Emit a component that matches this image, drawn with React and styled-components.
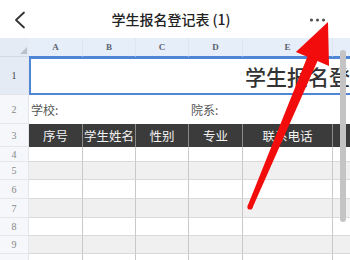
import React from "react";
import styled, { createGlobalStyle } from "styled-components";

const Global = createGlobalStyle`
  html, body { margin: 0; padding: 0; background: #fff; }
  body { font-family: "Noto Sans CJK SC", "Noto Sans", sans-serif; }
`;

const Page = styled.div`
  position: relative;
  width: 350px;
  height: 260px;
  overflow: hidden;
  background: #fff;
`;

const TopBar = styled.div`
  height: 38px;
  display: grid;
  grid-template-columns: 40px 1fr 40px;
  align-items: center;
  background: #fff;
`;

const Title = styled.div`
  text-align: center;
  font-size: 14px;
  font-weight: 500;
  color: #222;
  padding-right: 8px;
`;

const IconBtn = styled.div`
  display: flex;
  align-items: center;
  height: 38px;
`;

const Sheet = styled.div`
  display: grid;
  grid-template-columns: 29px 54px 53px 53px 54px 90px 60px;
  grid-template-rows: 19px 38px 29px 23px 15px 18px 19px 19px 18px 18px 19px;
  width: 420px;
`;

const Corner = styled.div`
  position: relative;
  background: #e4ebf4;
  border-bottom: 1px solid #cfd8e4;
  &::after {
    content: "";
    position: absolute;
    right: 2px;
    bottom: 2px;
    border-left: 7px solid transparent;
    border-bottom: 7px solid #b9c1cb;
  }
`;

const ColHead = styled.div`
  background: #e6eef9;
  border-right: 1px solid #dde6f2;
  border-bottom: 1px solid #4f86d6;
  display: flex;
  align-items: center;
  justify-content: center;
  font-family: "Liberation Serif", "DejaVu Serif", serif;
  font-weight: bold;
  font-size: 9px;
  color: #5a6270;
`;

const RowNum = styled.div`
  background: ${(p) => (p.$active ? "#e4ebf5" : "#f5f7fa")};
  border-bottom: 1px solid #e3e7ec;
  border-right: 1px solid #e3e7ec;
  display: flex;
  align-items: center;
  justify-content: center;
  font-family: "Liberation Serif", "DejaVu Serif", serif;
  font-size: 10px;
  color: ${(p) => (p.$active ? "#444" : "#888")};
`;

const TitleCell = styled.div`
  grid-column: 2 / -1;
  border: 2px solid #4f86d6;
  border-right: none;
  display: flex;
  align-items: center;
  padding-left: 214px;
  font-size: 21px;
  font-weight: 500;
  color: #333;
  white-space: nowrap;
  overflow: hidden;
`;

const InfoCell = styled.div`
  grid-column: span ${(p) => p.$span};
  display: flex;
  align-items: center;
  padding-left: 2px;
  font-size: 12px;
  color: #555;
`;

const HeadCell = styled.div`
  background: #3b3b3b;
  border-right: 1px solid #8a8a8a;
  display: flex;
  align-items: center;
  justify-content: center;
  font-size: 12.5px;
  color: #f2f2f2;
  white-space: nowrap;
`;

const Cell = styled.div`
  background: ${(p) => (p.$shade ? "#f0f0f0" : "#fff")};
  border-right: 1px solid #c9c9c9;
  border-bottom: 1px solid #d9d9d9;
`;

const ScrollThumb = styled.div`
  position: absolute;
  left: 340px;
  top: 50px;
  width: 6px;
  height: 172px;
  border-radius: 3px;
  background: #c4c4c4;
`;

const Overlay = styled.svg`
  position: absolute;
  left: 0;
  top: 0;
  pointer-events: none;
`;

const letters = ["A", "B", "C", "D", "E", ""];
const heads = ["序号", "学生姓名", "性别", "专业", "联系电话", ""];

function Arrow() {
  const tip = [328, 22];
  const tail = [250, 207];
  const dx = tip[0] - tail[0];
  const dy = tip[1] - tail[1];
  const len = Math.hypot(dx, dy);
  const u = [dx / len, dy / len];
  const n = [-u[1], u[0]];
  const headLen = 40;
  const headHalf = 18;
  const base = [tip[0] - headLen * u[0], tip[1] - headLen * u[1]];
  const topHalf = 5.5;
  const botHalf = 2.6;
  const p = (pt) => `${pt[0].toFixed(1)},${pt[1].toFixed(1)}`;
  const pts = [
    tip,
    [base[0] + headHalf * n[0], base[1] + headHalf * n[1]],
    [base[0] + topHalf * n[0], base[1] + topHalf * n[1]],
    [tail[0] + botHalf * n[0], tail[1] + botHalf * n[1]],
    [tail[0] - botHalf * n[0], tail[1] - botHalf * n[1]],
    [base[0] - topHalf * n[0], base[1] - topHalf * n[1]],
    [base[0] - headHalf * n[0], base[1] - headHalf * n[1]],
  ];
  return (
    <Overlay width="350" height="260" viewBox="0 0 350 260">
      <polygon points={pts.map(p).join(" ")} fill="#f20c0c" />
      <circle cx={tail[0]} cy={tail[1]} r={botHalf} fill="#f20c0c" />
    </Overlay>
  );
}

export default function App() {
  const bodyRows = [4, 5, 6, 7, 8, 9, 10];
  return (
    <Page>
      <Global />
      <TopBar>
        <IconBtn>
          <svg width="40" height="38" viewBox="0 0 40 38">
            <polyline points="24,12.5 16,20 24,27.5" fill="none" stroke="#333" strokeWidth="1.8" strokeLinecap="round" strokeLinejoin="round" />
          </svg>
        </IconBtn>
        <Title>学生报名登记表 (1)</Title>
        <IconBtn>
          <svg width="40" height="38" viewBox="0 0 40 38">
            <circle cx="1.5" cy="20" r="1.6" fill="#555" />
            <circle cx="7.5" cy="20" r="1.6" fill="#555" />
            <circle cx="13.5" cy="20" r="1.6" fill="#555" />
          </svg>
        </IconBtn>
      </TopBar>
      <Sheet>
        <Corner />
        {letters.map((l, i) => (
          <ColHead key={i}>{l}</ColHead>
        ))}

        <RowNum $active>1</RowNum>
        <TitleCell>学生报名登记表</TitleCell>

        <RowNum>2</RowNum>
        <InfoCell $span={3}>学校:</InfoCell>
        <InfoCell $span={3}>院系:</InfoCell>

        <RowNum>3</RowNum>
        {heads.map((h, i) => (
          <HeadCell key={i}>{h}</HeadCell>
        ))}

        {bodyRows.map((r) => (
          <React.Fragment key={r}>
            <RowNum>{r < 10 ? r : ""}</RowNum>
            {letters.map((_, i) => (
              <Cell key={i} $shade={r % 2 === 1} />
            ))}
          </React.Fragment>
        ))}
      </Sheet>
      <ScrollThumb />
      <Arrow />
    </Page>
  );
}
